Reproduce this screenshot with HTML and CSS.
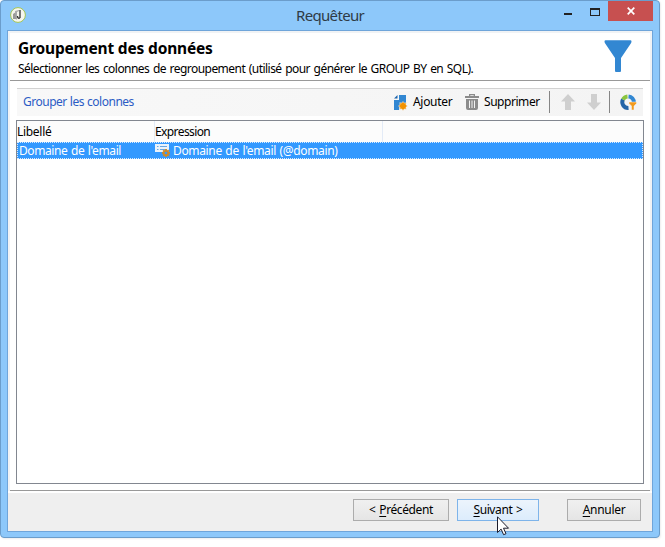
FILE: index.html
```html
<!DOCTYPE html>
<html lang="fr">
<head>
<meta charset="utf-8">
<title>Requêteur</title>
<link rel="stylesheet" href="styles.css">
</head>
<body>
<div class="window">
  <div class="titlebar">
    <svg class="app-icon" width="16" height="16" viewBox="0 0 16 16"><circle cx="8" cy="8" r="7.4" fill="#f6f6ee" stroke="#a3c552"/><path d="M3 7l3-2v7H3z" fill="#999"/><path d="M5 4l4-1v1L7 5v7l-1 1z" fill="#aaa"/><path d="M10 3v8M7.500 9q0 3 2.500 2" fill="none" stroke="#333" stroke-width="1.3"/></svg>
    <span class="title">Requêteur</span>
    <div class="controls">
      <svg width="44" height="20" viewBox="0 0 44 20"><path d="M0 12h8v2H0z" fill="#222"/><path d="M26 7h10v8H26z" fill="#222"/><path d="M27 9h8v5h-8z" fill="#8dc8fa"/></svg>
      <span class="close"><svg width="8" height="8" viewBox="0 0 8 8"><path d="M.7.7l6.6 6.6M7.3.7L.7 7.3" stroke="#fff" stroke-width="1.7"/></svg></span>
    </div>
  </div>
  <div class="client">
    <div class="header">
      <div>
        <h1><span>Groupement des données</span></h1>
        <p class="subtitle">Sélectionner les colonnes de regroupement (utilisé pour générer le GROUP BY en SQL).</p>
      </div>
      <svg class="funnel" width="28" height="33" viewBox="0 0 28 33"><path d="M.5 1.5Q.5.3 1.6.3h24.8q1.1 0 1.1 1.2 0 1-.7 2L17 18v13q0 1-1 1h-4q-1 0-1-1V18L1.200 3.500Q.5 2.500.5 1.500z" fill="#3287d2"/></svg>
    </div>
    <div class="content">
      <div class="toolbar">
        <span class="caption">Grouper les colonnes</span>
        <svg class="i-add" width="14" height="17" viewBox="0 0 14 17"><path d="M5 1h7v8l-6 1-1 6H0V6h5z" fill="#3287d2"/><path d="M0 4.500L3.500 1v3.500z" fill="#1c65ad"/><path d="M9 7.500l1.300 1.600 2-.4-.4 2 1.600 1.300-1.600 1.300.4 2-2-.4L9 16.500l-1.300-1.600-2 .4.4-2L4.500 12l1.600-1.300-.4-2 2 .4z" fill="#f39200" stroke="#f5f5f5" stroke-width=".5"/></svg>
        <span class="t-add">Ajouter</span>
        <svg class="i-del" width="14" height="16" viewBox="0 0 14 16"><path d="M0 2h4V0h6v2h4v2H0zm5.300 0h3.400v-.8H5.300zM1 5h12v9q0 2-2 2H3q-2 0-2-2z" fill="#8b8b8b" fill-rule="evenodd"/><path d="M4.500 6.500v7.500M7 6.500v7.500M9.500 6.500v7.500" stroke="#f2f2f2"/></svg>
        <span class="t-del">Supprimer</span>
        <i class="sep"></i>
        <svg class="i-up" width="14" height="16" viewBox="0 0 14 16"><path d="M7 0l7 7.500H10V16H4V7.500H0z" fill="#cfcfcf"/></svg>
        <svg class="i-down" width="14" height="16" viewBox="0 0 14 16"><path d="M7 16L0 8.500h4V0h6v8.500h4z" fill="#cfcfcf"/></svg>
        <i class="sep sep2"></i>
        <svg class="i-dist" width="17" height="17" viewBox="0 0 17 17"><g fill="none" stroke-width="4"><path d="M8.500 14a5.800 5.800 0 0 1-5.500-8.500" stroke="#2465a8"/><path d="M3 5.500a5.800 5.800 0 0 1 4.500-3" stroke="#8bc53f"/><path d="M8.500 2.500a5.800 5.800 0 0 1 5.300 6" stroke="#3287d2"/></g><path d="M9 8h7.500v1.500L14 12v4h-2.500v-4L9 9.500z" fill="#f39a1d" stroke="#f5f5f5" stroke-width=".5"/></svg>
      </div>
      <div class="table">
        <div class="thead"><span class="th c1"><b>Libellé</b></span><span class="th c2"><b>Expression</b></span></div>
        <div class="row"><span class="cell"><span class="t-dom">Domaine de l'email</span></span>
          <svg class="i-field" width="16" height="15" viewBox="0 0 16 15"><path d="M0 1h14v8H0z" fill="#e9f2fb"/><path d="M2 3.500h1.500M5 3.500h7M2 6.500h1.500M5 6.500h5" stroke="#68a5e0"/><g stroke="#c98a30" stroke-width="2"><path d="M11 6v8M7 10h8M8.200 7.200l5.600 5.600M13.800 7.200l-5.600 5.600"/></g><circle cx="11" cy="10" r="2.700" fill="#c98a30"/><circle cx="11" cy="10" r="1.300" fill="#3399ff"/></svg>
          <span class="t-expr">Domaine de l'email (@domain)</span></div>
      </div>
    </div>
    <div class="footer">
      <div class="btn prev"><span>&lt; <u>P</u>récédent</span></div>
      <div class="btn next"><span><u>S</u>uivant &gt;</span></div>
      <div class="btn cancel"><span><u>A</u>nnuler</span></div>
    </div>
  </div>
</div>
<svg class="cursor" width="13" height="20" viewBox="0 0 13 20"><path d="M.5.800v15.700l3.600-3.400 2.500 5.600 2.400-1-2.500-5.500h5z" fill="#fff" stroke="#1b1b2b"/></svg>
</body>
</html>
```
FILE: styles.css
```css
* { box-sizing: border-box; }
body { margin: 0; width: 665px; height: 547px; background: #fff; overflow: hidden; font: 12px/16px "Noto Sans", "Open Sans", sans-serif; color: #000; }
svg { display: block; flex: none; }
span { white-space: nowrap; }
.window { width: 660px; height: 538px; background: #8dc8fa; border: 1px solid #6b9dcb; border-radius: 4px; padding: 0 6px 6px; box-shadow: 1px 1px 2px #eee; }
.titlebar { height: 29px; display: flex; margin-right: -6px; }
.app-icon { margin: 6px 0 0 3px; }
.title { font-size: 15px; line-height: 20px; color: #2f3b46; margin: 4px 0 0 270px; letter-spacing: -.67px; }
.controls { display: flex; margin: 0 6px 0 auto; }
.close { width: 45px; height: 20px; background: #c75050; display: flex; align-items: center; justify-content: center; }
.client { height: 502px; border: 1px solid #6fa5da; background: #fff; box-shadow: inset 0 0 0 2px #f1f3f5; padding: 0 2px; display: flex; flex-direction: column; }
.header { height: 50px; border-bottom: 1px solid #999; padding: 7px 18px 0 8px; display: flex; justify-content: space-between; }
h1 { margin: 0; font-size: 15.5px; line-height: 20px; font-weight: 700; letter-spacing: -.18px; }
.subtitle { margin: 3px 0 0; white-space: nowrap; letter-spacing: -.54px; word-spacing: 1px; }
.funnel { margin-top: 2px; }
.content { height: 410px; border-bottom: 1px solid #999; padding: 7px 6px 0; }
.toolbar { height: 28px; margin: 0 1px; border-top: 1px solid #d2d2d2; background: linear-gradient(90deg, #f8f8f8, #f4f4f4); display: flex; align-items: center; padding: 0 0 1px 6px; }
.caption { width: 371px; color: #2c5cc5; letter-spacing: -.5px; word-spacing: .5px; }
.t-add { width: 52px; margin-left: 5px; letter-spacing: -.3px; }
.t-del { width: 65px; margin-left: 5px; letter-spacing: -.45px; }
.sep { width: 1px; height: 22px; background: #858585; }
.i-up { margin-left: 11px; }
.i-down { margin-left: 12px; }
.sep2 { margin-left: 8px; }
.i-dist { margin-left: 10px; }
.table { height: 364px; margin-top: 4px; border: 1px solid #828790; background: #fff; }
.thead { height: 21px; display: flex; background: #fcfcfc; }
.th { border-right: 1px solid #e3ebf7; line-height: 21px; }
.th b { font-weight: 400; letter-spacing: -.3px; }
.th.c2 b { letter-spacing: -.6px; }
.c1 { width: 138px; }
.c2 { width: 228px; }
.row { height: 17px; background: #3399ff; color: #fff; border: 1px dotted #d9ebff; display: flex; align-items: center; padding-left: 1px; }
.cell { width: 136px; }
.t-dom, .t-expr { letter-spacing: -.4px; word-spacing: .8px; }
.t-expr { margin-left: 2px; letter-spacing: -.35px; }
.footer { flex: 1; background: #efefef; border-top: 2px solid #fff; margin: 0 -2px; display: flex; padding: 6px 11px 0 345px; }
.btn { height: 22px; border: 1px solid #acacac; background: linear-gradient(#f0f0f0, #e5e5e5); display: flex; align-items: center; justify-content: center; letter-spacing: -.3px; padding-bottom: 1px; }
.prev { width: 96px; }
.next { width: 82px; margin-left: 8px; border-color: #7eb4ea; background: linear-gradient(#ecf4fc, #dcecfc); }
.cancel { width: 74px; margin-left: 28px; }
.prev, .next { letter-spacing: -.4px; word-spacing: 1px; }
u { text-underline-offset: 2px; }
.cursor { position: absolute; left: 497px; top: 516px; }
```
